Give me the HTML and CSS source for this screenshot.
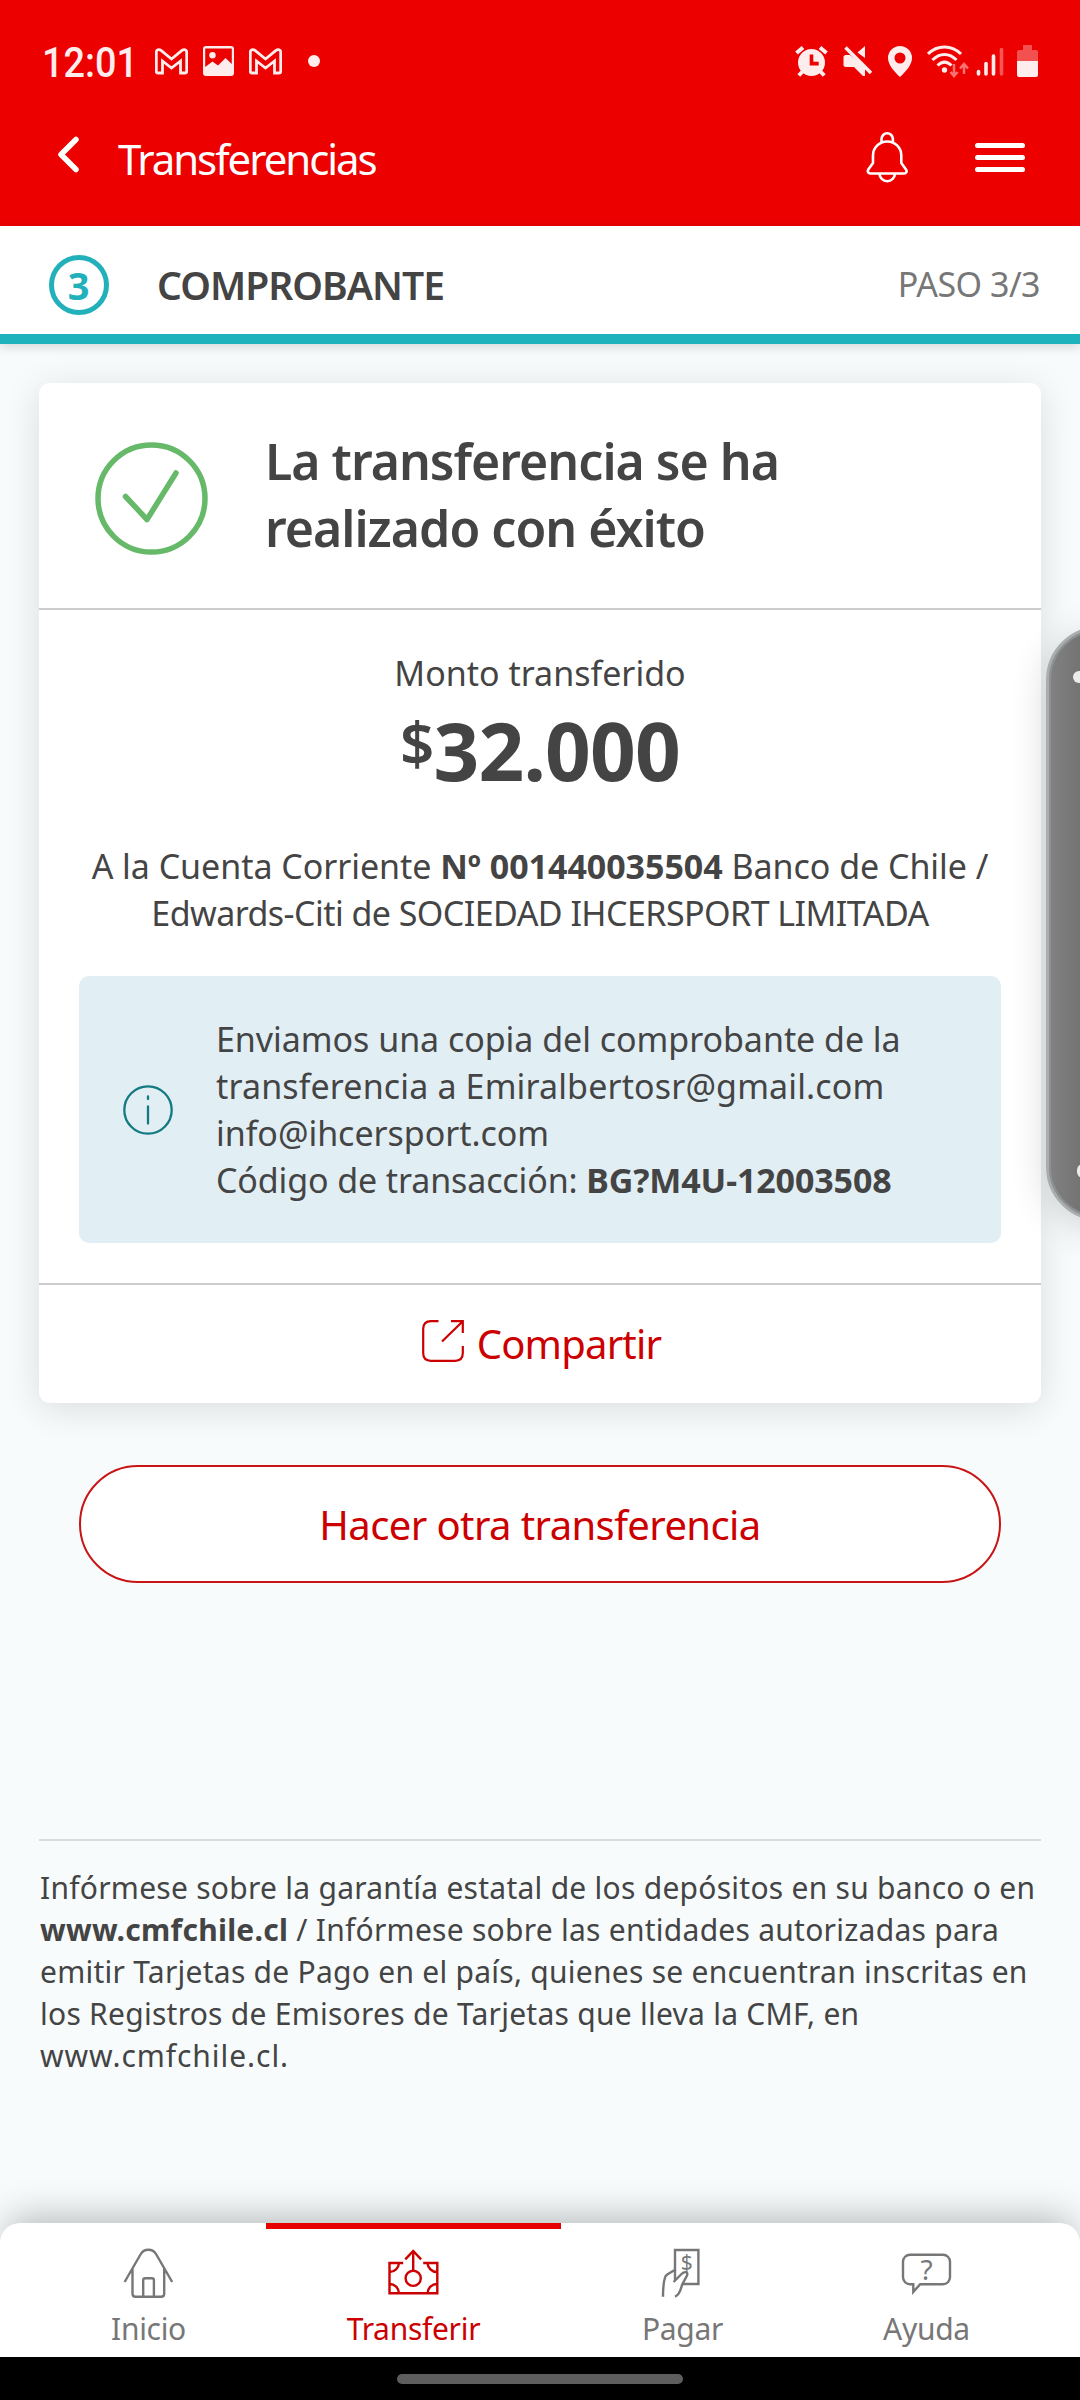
FILE: index.html
```html
<!DOCTYPE html>
<html lang="es">
<head>
<meta charset="utf-8">
<title>Transferencias</title>
<link rel="stylesheet" href="styles.css">
</head>
<body>
<div class="screen">
  <header class="header">
    <div class="status">
      <span class="clock">12:01</span>
      <div class="status-left">
        <svg class="gmail" width="33" height="27" viewBox="0 0 33 27"><path d="M1.3 23.5V4.5C1.3 1.5 4 .8 6 2.4L16.5 11 27 2.4C29 .8 31.7 1.5 31.7 4.5V23.5Q31.7 25 30 25H25.5V13L16.5 20 7.5 13V25H3Q1.3 25 1.3 23.5Z"/></svg>
        <svg width="31" height="30" viewBox="0 0 31 30"><path fill="#ffecec" fill-rule="evenodd" d="M3 0H28a3 3 0 0 1 3 3V27a3 3 0 0 1-3 3H3a3 3 0 0 1-3-3V3A3 3 0 0 1 3 0ZM2.2 2.5V21L9.5 15.5 15 19.5 22.5 12 28.8 18V2.5Z"/><circle cx="9.5" cy="9.3" r="3.2" fill="#ffecec"/></svg>
        <svg class="gmail" width="33" height="27" viewBox="0 0 33 27"><path d="M1.3 23.5V4.5C1.3 1.5 4 .8 6 2.4L16.5 11 27 2.4C29 .8 31.7 1.5 31.7 4.5V23.5Q31.7 25 30 25H25.5V13L16.5 20 7.5 13V25H3Q1.3 25 1.3 23.5Z"/></svg>
        <i class="dot"></i>
      </div>
      <div class="status-right">
        <svg class="alarm" width="33" height="31" viewBox="0 0 33 31"><path fill="#ffecec" fill-rule="evenodd" d="M16.5 3a13.5 13.5 0 1 1 0 27 13.5 13.5 0 0 1 0-27ZM14.7 8.5V19.5H23.7V15.8H18.3V8.5Z"/><path fill="none" stroke="#ffecec" stroke-width="4" d="M1.5 7 8 1.5M25 1.5 31.5 7M8 25 3.8 29.5M25 25 29.2 29.5"/></svg>
        <svg class="mute" width="30" height="32" viewBox="0 0 30 32"><path fill="#ffecec" d="M22 1V13L14.5 7.5ZM2 10H7L22 22V31L20 31 11 22H2L.5 20.5V11.5Z"/><path fill="none" stroke="#ffecec" stroke-width="3.6" d="M2.5 2.5 28 28"/></svg>
        <svg class="pin" width="24" height="31" viewBox="0 0 24 31"><path fill="#ffecec" fill-rule="evenodd" d="M12 0a12 12 0 0 1 12 12C24 19 17 26.5 12 31 7 26.5 0 19 0 12A12 12 0 0 1 12 0ZM12 6.500a5.500 5.500 0 1 0 0 11 5.500 5.500 0 0 0 0-11Z"/></svg>
        <svg class="wifi" width="42" height="33" viewBox="0 0 42 33"><g fill="none" stroke="#ffecec" stroke-width="3"><path d="M1 9C10 -.5 25 -.5 34 9"/><path d="M5.5 15C12.5 7.500 22.500 7.500 29.500 15"/><path d="M10.500 20.500C15 16 20 16 24.500 20.500"/></g><circle cx="17.500" cy="25" r="2.700" fill="#ffecec"/><path fill="none" stroke="#f97272" stroke-width="2.500" d="M27 19V30M23.500 27 27 31 30.500 27M37 29V19M33 23.500 37 19 41 23.500"/></svg>
        <svg class="signal" width="28" height="31" viewBox="0 0 28 31"><path fill="none" stroke="#ffecec" stroke-width="3.600" stroke-linecap="round" d="M2.500 25.500V28M10 17.500V28M17.500 10V28"/><path stroke="#f65555" stroke-width="3.600" stroke-linecap="round" d="M25.500 3.500V28"/></svg>
        <svg class="battery" width="21" height="32" viewBox="0 0 21 32"><path fill="#f35050" d="M6 0H15V5H19a2 2 0 0 1 2 2V16H0V7A2 2 0 0 1 2 5H6Z"/><path fill="#ffecec" d="M0 16H21V30a2 2 0 0 1-2 2H2A2 2 0 0 1 0 30Z"/></svg>
      </div>
    </div>
    <div class="appbar">
      <svg class="back" width="21" height="37" viewBox="0 0 21 37"><path d="M18 3.500 3 18.500 18 33.500"/></svg>
      <h1>Transferencias</h1>
      <svg class="bell" width="42" height="51" viewBox="0 0 42 51"><path d="M15.500 10.500V7a5.700 5.700 0 0 1 11.400 0V10.500M21.200 9.500C13 9.500 7 16 7 23.500V31L2.300 37.500C1.200 39.300 2 41.500 4.500 41.500H38C40.400 41.500 41.200 39.300 40 37.500L35.300 31V23.500C35.300 16 29.400 9.500 21.200 9.500ZM13.500 41.500a7.700 7.700 0 0 0 15.400 0"/></svg>
      <div class="menu"><i></i><i></i><i></i></div>
    </div>
  </header>

  <section class="step">
    <div class="step-number">3</div>
    <h2>COMPROBANTE</h2>
    <span class="step-count">PASO 3/3</span>
  </section>

  <main class="content">
    <article class="card">
      <div class="card-head">
        <svg class="check" width="113" height="113" viewBox="0 0 113 113"><circle cx="56.500" cy="56.500" r="53.500"/><path d="M30.500 54.500 52 77.500 81 31"/></svg>
        <h3>La transferencia se ha<br>realizado con éxito</h3>
      </div>
      <div class="card-body">
        <p class="label">Monto transferido</p>
        <p class="amount"><span class="currency">$</span>32.000</p>
        <p class="account">A la Cuenta Corriente <b>Nº 001440035504</b> Banco de Chile /<br><span class="tight">Edwards-Citi de SOCIEDAD IHCERSPORT LIMITADA</span></p>
        <div class="notice">
          <svg class="info" width="50" height="50" viewBox="0 0 50 50"><circle cx="25" cy="25" r="23.700"/><path d="M25 11.500V14M25 21.500V38.500"/></svg>
          <p>Enviamos una copia del comprobante de la<br><span class="email">transferencia a Emiralbertosr@gmail.com</span><br>info@ihcersport.com<br><span class="code">Código de transacción: <b>BG?M4U-12003508</b></span></p>
        </div>
      </div>
      <div class="share">
        <svg width="42" height="42" viewBox="0 0 42 42"><path d="M16.500 1.200H9Q1.200 1.200 1.200 9V33Q1.200 40.800 9 40.800H33Q40.800 40.800 40.800 33V26M29 1.200H40.800V13M40.800 1.200 20 21.500"/></svg>
        <span>Compartir</span>
      </div>
    </article>
    <div class="button">Hacer otra transferencia</div>
    <footer class="legal">Infórmese sobre la garantía estatal de los depósitos en su banco o en<br><b>www.cmfchile.cl</b> / Infórmese sobre las entidades autorizadas para<br>emitir Tarjetas de Pago en el país, quienes se encuentran inscritas en<br>los Registros de Emisores de Tarjetas que lleva la CMF, en<br><span class="site">www.cmfchile.cl.</span></footer>
  </main>

  <nav class="tabs">
    <div class="tab">
      <svg width="51" height="52" viewBox="0 0 51 52"><path d="M1.600 34 17.500 6.500C21 .2 29.800 .2 33.300 6.500L49.200 34M9.500 20V45.700q0 3 3 3H38.200q3 0 3-3V20M20.200 48.700V32.300q0-2 2-2H28.900q2 0 2 2V48.700"/></svg>
      <span>Inicio</span>
    </div>
    <div class="tab active">
      <svg width="51" height="52" viewBox="0 0 51 52"><path d="M15.200 15H1.500V45.300H49.300V15H35.200M25.200 22.700V3M17.300 11.300 25.200 3 33.100 11.300M1.500 24A9.500 9.500 0 0 0 11 15M49.300 24A9.500 9.500 0 0 1 39.500 15M1.500 36A9.500 9.500 0 0 1 11 45.300M49.300 36A9.500 9.500 0 0 0 39.500 45.300"/><circle cx="25.200" cy="30.300" r="7.600"/></svg>
      <span>Transferir</span>
    </div>
    <div class="tab">
      <svg width="45" height="52" viewBox="0 0 45 52"><path d="M15 32V2H38.400V36H22.900M3 48.700C3 42 3.200 35 5 29.500 5.500 27.500 6.500 27 8 26L16 21.300M13.600 34 21.500 26C24 23.500 28.500 23 27 27.500L22 37C20.500 43 18.500 47.500 15 48.700"/><text x="26.700" y="21.500" font-size="21">$</text></svg>
      <span>Pagar</span>
    </div>
    <div class="tab">
      <svg width="51" height="52" viewBox="0 0 51 52"><path d="M9 6.700H42a7 7 0 0 1 7 7V29.300a7 7 0 0 1-7 7H19.200L12.300 43.800V36.300H9a7 7 0 0 1-7-7V13.700a7 7 0 0 1 7-7Z"/><text x="25.500" y="32" font-size="28">?</text></svg>
      <span>Ayuda</span>
    </div>
  </nav>
  <div class="gesture"><i></i></div>
  <aside class="edge-panel"><i></i><i></i></aside>
</div>
</body>
</html>
```
FILE: styles.css
```css
* { box-sizing: border-box; }
body, h1, h2, h3, p { margin: 0; }
body { font-family: "Noto Sans", "Open Sans", sans-serif; color: #444; }
svg { display: block; flex: none; }

.screen {
  position: relative;
  display: flex;
  flex-direction: column;
  width: 1080px;
  height: 2400px;
  overflow: hidden;
  background: #f7fbfc;
}

/* Header */
.header { height: 226px; background: #ec0000; }
.status {
  display: flex;
  align-items: center;
  height: 122px;
  padding: 0 42px 0 42px;
}
.clock {
  width: 113px;
  font: 500 42px/50px Roboto, sans-serif;
  color: #ffecec;
  transform: scaleX(.9);
  transform-origin: 0 50%;
  margin-top: 3px;
}
.status-left { display: flex; align-items: center; gap: 15px; }
.gmail path { fill: none; stroke: #ffecec; stroke-width: 2.8; }
.dot { width: 12px; height: 12px; margin-left: 11px; border-radius: 50%; background: #ffecec; }
.status-right { display: flex; align-items: center; margin-left: auto; }
.mute { margin-left: 15px; }
.pin { margin-left: 15px; }
.wifi { margin-left: 15px; }
.signal { margin-left: 7px; }
.battery { margin-left: 13px; }

.appbar {
  display: flex;
  align-items: center;
  height: 74px;
  padding: 0 55px 0 58px;
}
.back { margin-top: -9px; }
.back path { fill: none; stroke: #fff; stroke-width: 5.5; stroke-linecap: round; stroke-linejoin: round; }
.appbar h1 {
  margin-left: 39px;
  font-size: 42px;
  line-height: 56px;
  font-weight: 400;
  letter-spacing: -2.05px;
  color: #fff;
}
.bell { margin: -3px 0 0 auto; }
.bell path { fill: none; stroke: #fff; stroke-width: 2.6; stroke-linejoin: round; }
.menu { display: flex; flex-direction: column; gap: 7.3px; width: 50px; margin: -3px 0 0 67px; }
.menu i { height: 5px; border-radius: 3px; background: #fff; }

/* Step indicator */
.step {
  display: flex;
  align-items: center;
  height: 118px;
  padding: 0 40px 0 49px;
  border-bottom: 10px solid #1eb3bc;
  background: #fff;
  box-shadow: 0 3px 10px rgba(0, 0, 0, .14);
}
.step-number {
  width: 60px;
  height: 60px;
  margin-top: 9px;
  border: 5px solid #22b1ba;
  border-radius: 50%;
  font-size: 38px;
  font-weight: 700;
  line-height: 50px;
  text-align: center;
  text-indent: -1px;
  color: #22b1ba;
}
.step h2 { margin: 10px 0 0 48px; font-size: 39px; font-weight: 600; line-height: 54px; letter-spacing: -.95px; }
.step-count { margin: 8px 0 0 auto; font-size: 34px; line-height: 46px; letter-spacing: -.5px; color: #777; }

/* Receipt card */
.content { flex: 1; padding: 39px 39px 0; }
.card {
  height: 1020px;
  border-radius: 11px;
  background: #fff;
  box-shadow: 0 6px 36px rgba(0, 0, 0, .12);
}
.card-head {
  display: flex;
  align-items: flex-start;
  height: 227px;
  padding-left: 56px;
  border-bottom: 2px solid #ccc;
}
.check { margin-top: 59px; }
.check circle, .check path { fill: none; stroke: #67b96a; stroke-width: 5.5; stroke-linecap: round; stroke-linejoin: round; }
.card-head h3 {
  margin: 45px 0 0 57px;
  font-size: 50px;
  font-weight: 600;
  line-height: 67px;
  letter-spacing: -.98px;
}
.card-body { height: 675px; padding: 40px 40px 0; border-bottom: 2px solid #ccc; text-align: center; }
.label { font-size: 34px; line-height: 47px; }
.amount { margin-top: 13px; font-size: 80px; font-weight: 700; line-height: 80px; letter-spacing: -.8px; white-space: nowrap; }
.currency { font-size: 60px; font-weight: 600; line-height: 0; vertical-align: 16px; }
.account { margin: 53px -20px 0; font-size: 34px; line-height: 47px; letter-spacing: -.04px; white-space: nowrap; }
.tight { letter-spacing: -.55px; }
.notice {
  display: flex;
  align-items: center;
  height: 267px;
  margin-top: 39px;
  padding-left: 44px;
  border-radius: 10px;
  background: #e1eef4;
  text-align: left;
}
.info circle, .info path { fill: none; stroke: #137a81; stroke-width: 2.3; stroke-linecap: round; }
.notice p { margin-left: 43px; font-size: 34px; line-height: 47px; letter-spacing: -.04px; white-space: nowrap; }
.email { letter-spacing: .14px; }
.code { letter-spacing: -.12px; }
.share {
  display: flex;
  align-items: center;
  justify-content: center;
  gap: 13px;
  height: 118px;
  padding-left: 3px;
  color: #c00;
}
.share svg { margin-top: -7px; overflow: visible; }
.share path { fill: none; stroke: #c00; stroke-width: 2.2; }
.share span { font-size: 40px; line-height: 54px; letter-spacing: -.8px; }

.button {
  display: flex;
  align-items: center;
  justify-content: center;
  height: 118px;
  margin: 62px 40px 0;
  border: 2px solid #c81414;
  border-radius: 60px;
  background: #fff;
  font-size: 40px;
  letter-spacing: -.6px;
  color: #c00;
}
.legal {
  margin-top: 256px;
  padding: 26px 0 0 1px;
  border-top: 2px solid #dadddd;
  font-size: 30px;
  line-height: 42px;
  letter-spacing: .26px;
  white-space: nowrap;
}
.site { letter-spacing: .95px; }

/* Bottom navigation */
.tabs {
  display: grid;
  grid-template-columns: 235px 295px 243px 245px;
  height: 134px;
  padding-left: 31px;
  border-radius: 20px 20px 0 0;
  background: #fff;
  box-shadow: 0 -14px 36px -8px rgba(0, 0, 0, .26);
}
.tab {
  display: flex;
  flex-direction: column;
  align-items: center;
  padding-top: 25px;
  color: #777;
}
.tab svg { fill: none; stroke: currentColor; stroke-width: 2.4; }
.tab text { fill: currentColor; stroke: none; text-anchor: middle; }
.tab span { margin-top: 9px; font-size: 30px; line-height: 40px; letter-spacing: -.3px; }
.tab.active { padding-top: 19px; border-top: 6px solid #e60000; color: #c00; }
.gesture { display: flex; justify-content: center; height: 43px; padding-top: 17px; background: #000; }
.gesture i { width: 286px; height: 10px; border-radius: 5px; background: #5e5e5e; }

/* System edge panel, partly off screen */
.edge-panel {
  position: absolute;
  top: 626px;
  left: 1046px;
  display: flex;
  flex-direction: column;
  justify-content: space-between;
  width: 120px;
  height: 595px;
  padding: 42px 0 40px 24px;
  border: 3px solid #a9adad;
  border-radius: 54px;
  background: linear-gradient(90deg, #828282, #747474 30px);
  box-shadow: inset 0 0 0 2px #8e9191, 0 8px 36px rgba(0, 0, 0, .16);
}
.edge-panel i { width: 40px; height: 12px; border-radius: 6px; background: #ececec; }
.edge-panel i + i { height: 14px; margin-left: 4px; }
```
